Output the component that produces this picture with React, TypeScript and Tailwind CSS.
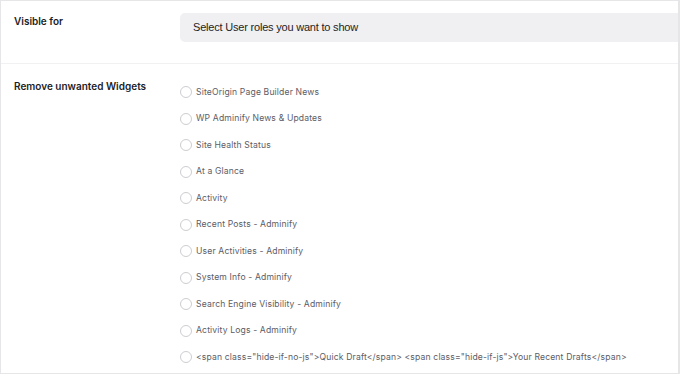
import React from "react";

const widgets = [
  "SiteOrigin Page Builder News",
  "WP Adminify News & Updates",
  "Site Health Status",
  "At a Glance",
  "Activity",
  "Recent Posts - Adminify",
  "User Activities - Adminify",
  "System Info - Adminify",
  "Search Engine Visibility - Adminify",
  "Activity Logs - Adminify",
  '<span class="hide-if-no-js">Quick Draft</span> <span class="hide-if-js">Your Recent Drafts</span>',
];

export default function App() {
  return (
    <div className="w-[680px] h-[375px] bg-white overflow-hidden font-['Inter',sans-serif]">
      <div className="h-[374px] border border-[#e6e6e8] border-r-2 overflow-hidden">
        {/* Visible for */}
        <div className="flex border-b border-[#f1f1f3] h-[63px]">
          <div className="w-[179px] shrink-0 pl-[13px] pt-[13px] text-[10px] font-semibold text-[#1d1d26]">
            Visible for
          </div>
          <div className="flex-1 pt-[12px]">
            <div className="h-[29px] bg-[#f0f0f2] rounded-l-[5px] flex items-center pl-[13px] text-[11px] tracking-[-0.2px] text-[#1e1e24] font-['Liberation_Sans',sans-serif]">
              Select User roles you want to show
            </div>
          </div>
        </div>

        {/* Remove unwanted Widgets */}
        <div className="flex">
          <div className="w-[179px] shrink-0 pl-[13px] pt-[15px] text-[10px] font-semibold text-[#1d1d26]">
            Remove unwanted Widgets
          </div>
          <div className="flex-1 pt-[15px] flex flex-col">
            {widgets.map((w) => (
              <label key={w} className="flex items-center h-[26.5px] gap-[4px] text-[8.6px] text-[#5c5c66] tracking-[0.15px]">
                <span className="w-[12px] h-[12px] rounded-full border border-[#cdcdd2] bg-white shrink-0" />
                <span className="whitespace-nowrap">{w}</span>
              </label>
            ))}
          </div>
        </div>
      </div>
    </div>
  );
}
